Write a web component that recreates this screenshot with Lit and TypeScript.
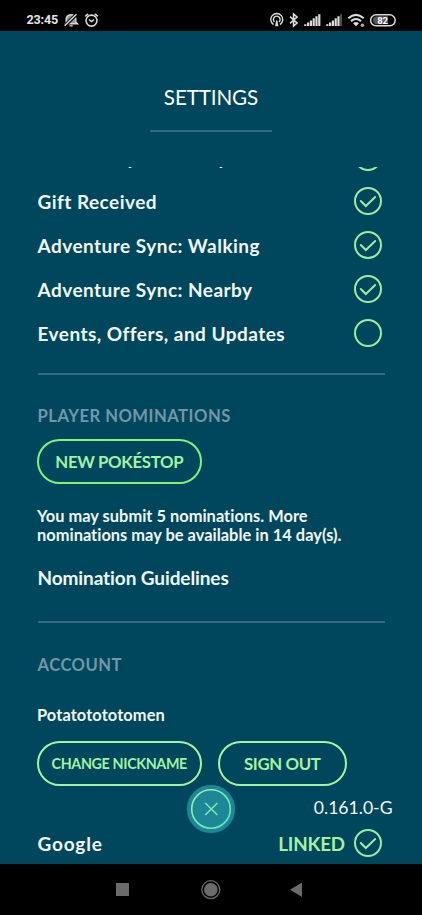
import { LitElement, html, svg, css } from "lit";
import { customElement, property } from "lit/decorators.js";

@customElement("check-ring")
class CheckRing extends LitElement {
  @property({ type: Boolean }) checked = false;
  static styles = css`
    :host { display: block; width: 28px; height: 28px; flex: none; }
    svg { display: block; }
  `;
  render() {
    return html`<svg width="28" height="28" viewBox="0 0 28 28" fill="none" stroke="#9ced9f" stroke-width="2">
      <circle cx="14" cy="14" r="13"></circle>
      ${this.checked ? svg`<path d="M6.8 14 L11.8 19 L21.2 10" stroke-linecap="round"></path>` : ""}
    </svg>`;
  }
}

@customElement("status-bar")
class StatusBar extends LitElement {
  static styles = css`
    :host {
      display: flex; justify-content: space-between; height: 31px; box-sizing: border-box;
      padding: 9px 25px 0 26.5px; background: #000; color: #e4e4e4;
      font: 700 12.6px/22px Roboto, sans-serif;
    }
    .time { width: 36.5px; letter-spacing: -.2px; }
    .group { display: flex; height: 22px; align-items: center; }
    svg { display: block; }
    .level { font: 700 9.5px Roboto, sans-serif; }
  `;
  render() {
    return html`
      <div class="group">
        <span class="time">23:45</span>
        <svg width="37" height="16" viewBox="0 0 37 16" fill="none" stroke="#d8d8d8" stroke-width="1.4">
          <path d="M3.2 11.4 V7 Q3.2 3.1 8 2.6 Q12.8 3.2 12.8 7 V10 L14.4 11.7 H1.8 Z M6.5 13.9 H9.8" fill="#d8d8d8" fill-opacity=".7"></path>
          <path d="M1.3 14.3 L13.8 2" stroke="#000" stroke-width="3.4"></path>
          <path d="M1.6 13.8 L13.4 2.2" stroke-width="1.6"></path>
          <circle cx="28.5" cy="8.6" r="5.5" stroke-width="1.6"></circle>
          <path d="M22.2 4.4 L25.2 1.9 M34.8 4.4 L31.8 1.9 M26 7.5 L28.5 9.6 L31 7.7" stroke-width="1.6"></path>
        </svg>
      </div>
      <div class="group">
        <svg width="127" height="16" viewBox="0 0 127 16" fill="none" stroke="#dcdcdc" stroke-width="1.4">
          <path d="M3.5 12.6 A6 6 0 1 1 10 12.6"></path>
          <path d="M4.4 10 A3.4 3.4 0 1 1 9.1 10"></path>
          <path d="M5.1 14.2 L6.1 8.5 H7.4 L8.4 14.2 Z" fill="#dcdcdc" stroke="none"></path>
          <path d="M20 4.7 L27 11 L23.6 14 V2 L27 5 L20 11.3" stroke-width="1.6"></path>
          <g fill="#dcdcdc" stroke="none">
            <path d="M34.2 12.2h2.2v1.8h-2.2zM37 10.4h2.2v3.6h-2.2zM39.8 8.4h2.2v5.6h-2.2zM42.6 6.2h2.2v7.8h-2.2zM45.4 4.2h2.2v9.8h-2.2zM48.2 2.2h2.2v11.8h-2.2z"></path>
            <path d="M56.2 12.2h2.2v1.8h-2.2zM59 10.4h2.2v3.6h-2.2zM61.8 8.4h2.2v5.6h-2.2zM64.6 6.2h2.2v7.8h-2.2zM67.4 4.2h2.2v9.8h-2.2z"></path>
            <path d="M70 2.2h2v11.8h-2z" fill="#4c4c4c"></path>
            <circle cx="92.4" cy="13.2" r="1.8" fill="#a8a8a8"></circle>
            <path d="M83 11.2 Q86 9 89 11.2 L86 14.2 Z"></path>
          </g>
          <path d="M78.3 6.2 Q86 -.6 93.7 6.2 M81 9.1 Q86 4.9 91 9.1" stroke-width="2.1"></path>
          <rect x="100.6" y="2.8" width="24.6" height="11" rx="5.5" stroke-width="1.5"></rect>
          <path d="M103 8.3 a4 4 0 0 1 4-4 h11 v8 h-11 a4 4 0 0 1-4-4z" fill="#555" stroke="none"></path>
          <text class="level" x="112.6" y="11.7" text-anchor="middle" fill="#fff" stroke="none">82</text>
        </svg>
      </div>`;
  }
}

@customElement("app-root")
class AppRoot extends LitElement {
  static styles = css`
    :host {
      display: flex; flex-direction: column; position: relative; width: 422px; height: 915px;
      background: #00465c; overflow: hidden; color: #f0f6f8;
      font-family: Lato, sans-serif; font-weight: 700; white-space: nowrap;
      font-variant-ligatures: none;
    }
    header { height: 136px; display: flex; flex-direction: column; align-items: center; flex: none; }
    h1 { margin: 53px 0 20px; font-weight: 400; font-size: 20.6px; line-height: 26px; color: #fff; letter-spacing: -.1px; }
    .title-line { width: 122px; height: 2px; background: #37697c; }
    main { height: 697px; overflow: hidden; flex: none; display: flex; flex-direction: column; padding: 0 38px; box-sizing: border-box; }
    .list { margin-top: -32px; flex: none; }
    .row { display: flex; justify-content: space-between; align-items: center; height: 44px; padding-right: 2px; font-size: 19px; letter-spacing: .47px; }
    .row > span { margin-left: -.5px; }
    .line { width: 347px; height: 2px; background: #37697c; flex: none; }
    h2 { margin: 0 0 0 -.5px; font-size: 16.6px; line-height: 20px; color: #7098a8; letter-spacing: .5px; }
    .after-list { margin-top: 18px; }
    .nominations { margin-top: 31px; }
    .account { margin-top: 32px; }
    .pill {
      box-sizing: border-box; height: 45px; border: 2px solid #a5f3a0; border-radius: 23px; background: none;
      color: #a3f3a1; font: 700 16.8px/41px Lato, sans-serif; text-align: center; padding: 0; flex: none; letter-spacing: -.35px;
    }
    .new { width: 164.5px; margin: 13px 0 0 -1px; border-color: #7df57a; }
    .note { margin: 21.5px 0 0 -1px; font-size: 16.4px; line-height: 19.4px; letter-spacing: .02px; }
    .guide { margin-top: 21.5px; margin-left: -.5px; font-size: 19px; line-height: 24px; letter-spacing: -.1px; }
    .after-guide { margin-top: 30.7px; }
    .name { margin: 30px 0 0 -1px; font-size: 16.4px; line-height: 20px; letter-spacing: .1px; }
    .buttons { display: flex; gap: 16px; margin: 16px 0 0 -1px; }
    .nick { width: 164.5px; font-size: 14.3px; }
    .out { width: 129.5px; }
    .google { margin-top: 37px; }
    .google > span:first-child { letter-spacing: .8px; }
    .linked { display: flex; align-items: center; gap: 9px; color: #a3f3a1; font-size: 18.8px; letter-spacing: -.15px; }
    .version { position: absolute; right: 29.5px; top: 796.5px; font-size: 17.6px; line-height: 22px; font-weight: 400; }
    .close { position: absolute; left: 186px; top: 784px; }
    nav { height: 51px; background: #000; flex: none; }
    nav svg, .close { display: block; }
  `;

  private rows: [string, boolean][] = [
    ["Friend Request Accepted", true],
    ["Gift Received", true],
    ["Adventure Sync: Walking", true],
    ["Adventure Sync: Nearby", true],
    ["Events, Offers, and Updates", false],
  ];

  render() {
    return html`
      <status-bar></status-bar>
      <header>
        <h1>SETTINGS</h1>
        <div class="title-line"></div>
      </header>
      <main>
        <div class="list">
          ${this.rows.map(([label, on]) => html`<div class="row"><span>${label}</span><check-ring ?checked=${on}></check-ring></div>`)}
        </div>
        <div class="line after-list"></div>
        <h2 class="nominations">PLAYER NOMINATIONS</h2>
        <button class="pill new">NEW POKÉSTOP</button>
        <div class="note">You may submit 5 nominations. More<br />nominations may be available in 14 day(s).</div>
        <div class="guide">Nomination Guidelines</div>
        <div class="line after-guide"></div>
        <h2 class="account">ACCOUNT</h2>
        <div class="name">Potatotototomen</div>
        <div class="buttons">
          <button class="pill nick">CHANGE NICKNAME</button>
          <button class="pill out">SIGN OUT</button>
        </div>
        <div class="row google">
          <span>Google</span>
          <span class="linked">LINKED<check-ring checked></check-ring></span>
        </div>
      </main>
      <nav>
        <svg width="422" height="51" viewBox="0 0 422 51">
          <rect x="116" y="19" width="13" height="13" fill="#6b6b6b"></rect>
          <circle cx="210.8" cy="25.7" r="9" fill="none" stroke="#6b6b6b" stroke-width="1.3"></circle>
          <circle cx="210.8" cy="25.7" r="6.8" fill="#6b6b6b"></circle>
          <path d="M290 25.7 L302 18.6 V33 Z" fill="#6b6b6b"></path>
        </svg>
      </nav>
      <div class="version">0.161.0-G</div>
      <svg class="close" width="50" height="50" viewBox="0 0 50 50" fill="none">
        <defs>
          <linearGradient id="ring" x1="0" y1="0" x2="1" y2="1">
            <stop offset="0" stop-color="#a0efa4"></stop>
            <stop offset="1" stop-color="#58e6c4"></stop>
          </linearGradient>
        </defs>
        <circle cx="25" cy="25.2" r="24.8" fill="#0b5167"></circle>
        <circle cx="25" cy="25" r="24" fill="#1d8798"></circle>
        <circle cx="25" cy="25" r="19.3" stroke="url(#ring)" stroke-width="1.6"></circle>
        <path d="M19.2 18.9 L31.4 31.1 M31.4 18.9 L19.2 31.1" stroke="#8beab0" stroke-width="1.4"></path>
      </svg>`;
  }
}
